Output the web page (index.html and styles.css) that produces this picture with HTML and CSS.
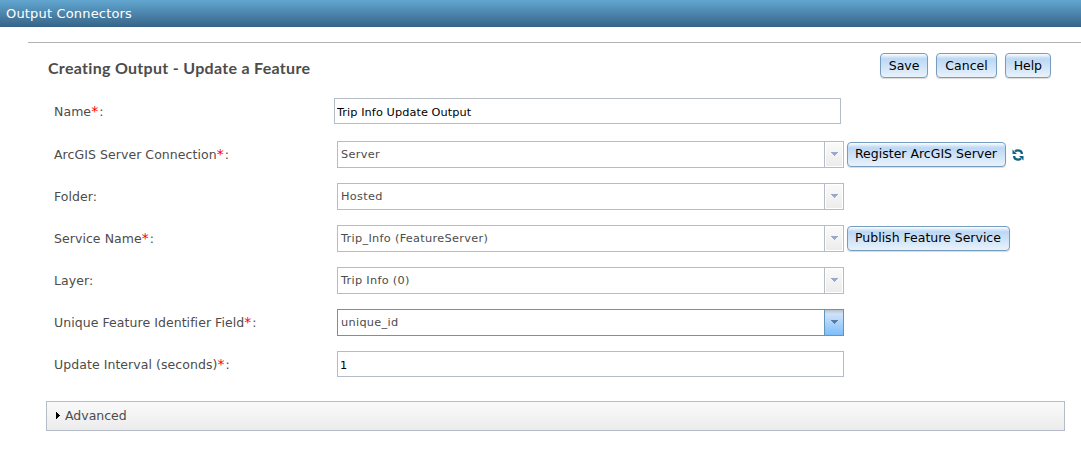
FILE: index.html
```html
<!DOCTYPE html>
<html lang="en">
<head>
  <meta charset="UTF-8">
  <title>Output Connectors</title>
  <link rel="stylesheet" href="styles.css">
</head>
<body>

  <div class="top-bar">Output Connectors</div>

  <div class="content">
    <div class="form-header">
      <h2>Creating Output - Update a Feature</h2>
      <div class="actions">
        <button class="btn">Save</button>
        <button class="btn">Cancel</button>
        <button class="btn">Help</button>
      </div>
    </div>

    <div class="form">
      <div class="row name-row">
        <label>Name<span class="required">*</span>:</label>
        <input class="text-input" type="text" value="Trip Info Update Output">
      </div>
      <div class="row">
        <label>ArcGIS Server Connection<span class="required">*</span>:</label>
        <div class="combo">
          <span class="value">Server</span>
          <span class="arrow"><svg width="7" height="4" viewBox="0 0 7 4"><path d="M0 0h7v1h-1v1h-1v1h-1v1h-1v-1h-1v-1h-1v-1h-1z"/></svg></span>
        </div>
        <button class="btn">Register ArcGIS Server</button>
        <svg class="refresh" width="12" height="12" viewBox="0 0 12 12">
          <path d="M3 2.3C5.2 0.9 9.9 0.9 9.9 5M9 9.7C6.8 11.1 2.1 11.1 2.1 7" fill="none" stroke="#135f86" stroke-width="2.2"/>
          <path d="M0.5 0.5v4.5h4.5zM11.5 11.5v-4.5h-4.5z" fill="#135f86"/>
        </svg>
      </div>
      <div class="row">
        <label>Folder:</label>
        <div class="combo">
          <span class="value">Hosted</span>
          <span class="arrow"><svg width="7" height="4" viewBox="0 0 7 4"><path d="M0 0h7v1h-1v1h-1v1h-1v1h-1v-1h-1v-1h-1v-1h-1z"/></svg></span>
        </div>
      </div>
      <div class="row">
        <label>Service Name<span class="required">*</span>:</label>
        <div class="combo">
          <span class="value">Trip_Info (FeatureServer)</span>
          <span class="arrow"><svg width="7" height="4" viewBox="0 0 7 4"><path d="M0 0h7v1h-1v1h-1v1h-1v1h-1v-1h-1v-1h-1v-1h-1z"/></svg></span>
        </div>
        <button class="btn">Publish Feature Service</button>
      </div>
      <div class="row">
        <label>Layer:</label>
        <div class="combo">
          <span class="value">Trip Info (0)</span>
          <span class="arrow"><svg width="7" height="4" viewBox="0 0 7 4"><path d="M0 0h7v1h-1v1h-1v1h-1v1h-1v-1h-1v-1h-1v-1h-1z"/></svg></span>
        </div>
      </div>
      <div class="row">
        <label>Unique Feature Identifier Field<span class="required">*</span>:</label>
        <div class="combo active">
          <span class="value">unique_id</span>
          <span class="arrow"><svg width="7" height="4" viewBox="0 0 7 4"><path d="M0 0h7v1h-1v1h-1v1h-1v1h-1v-1h-1v-1h-1v-1h-1z"/></svg></span>
        </div>
      </div>
      <div class="row">
        <label>Update Interval (seconds)<span class="required">*</span>:</label>
        <input class="text-input" type="text" value="1">
      </div>
    </div>

    <div class="advanced">
      <svg width="4" height="7" viewBox="0 0 4 7"><path d="M0 0h1v1h1v1h1v1h1v1h-1v1h-1v1h-1v1h-1z"/></svg>
      Advanced
    </div>
  </div>

</body>
</html>
```
FILE: styles.css
```css
:root {
  --border: #b5bcc7;
  --focus: #6397b9;
  --text: #4c4c4c;
}

* {
  box-sizing: border-box;
}

body {
  margin: 0;
  background: #fff;
  color: var(--text);
  font-family: Verdana, "DejaVu Sans", sans-serif;
  font-size: 12.5px;
}

svg {
  display: block;
  shape-rendering: crispEdges;
}

.top-bar {
  height: 27px;
  padding-left: 6px;
  background: linear-gradient(#62a6d0, #366488);
  color: #fff;
  font-size: 13px;
  letter-spacing: 0.17px;
  line-height: 27px;
}

.content {
  margin: 15px 0 0 28px;
  border-top: 1px solid #b2b2b2;
}

.form-header {
  display: flex;
  justify-content: space-between;
  align-items: flex-start;
  height: 47px;
  padding: 10px 30px 0 20px;
}

h2 {
  margin: 5px 0 0;
  font-family: Lato, sans-serif;
  font-size: 16px;
  font-weight: bold;
  letter-spacing: 0.3px;
  line-height: 20px;
}

.actions {
  display: flex;
  gap: 8px;
}

.btn {
  height: 25px;
  margin: 0;
  padding: 0 8px 1px 7px;
  border: 1px solid #769dc0;
  border-radius: 4px;
  background: linear-gradient(#fff 0, #d3e4f6 3px, #bcd8f4 5px, #e9f2fb 100%);
  box-shadow: 0 1px 1px rgba(0, 0, 0, 0.15);
  color: #000;
  font-family: inherit;
  font-size: 12.5px;
  white-space: nowrap;
}

.actions .btn {
  padding-left: 8px;
}

.actions .btn:first-child,
.actions .btn:last-child {
  letter-spacing: -0.05px;
}

.row {
  display: flex;
  align-items: center;
  height: 42px;
  padding-left: 26px;
}

.row label {
  width: 283px;
  letter-spacing: 0.06px;
}

.name-row {
  height: 43px;
  padding-bottom: 1px;
}

.name-row label {
  width: 280px;
}

.required {
  color: #f00;
  font-size: 14px;
  letter-spacing: 1px;
  line-height: 1;
}

.text-input {
  width: 507px;
  height: 26px;
  padding: 2px 2px 0;
  border: 1px solid var(--border);
  border-radius: 0;
  background: #fff;
  color: #000;
  font-family: inherit;
  font-size: 11.3px;
  letter-spacing: 0.08px;
}

.combo {
  display: flex;
  width: 507px;
  height: 27px;
  border: 1px solid var(--border);
  font-size: 11.3px;
  letter-spacing: 0.31px;
}

.combo .value {
  flex: 1;
  padding-left: 3px;
  line-height: 25px;
}

.combo .arrow {
  display: flex;
  align-items: center;
  justify-content: center;
  width: 18px;
  border: 1px solid #fff;
  background: linear-gradient(#fafafa, #ececec);
  box-shadow: -1px 0 0 var(--border);
  fill: #97a9d0;
}

.combo.active {
  border-color: var(--focus);
}

.combo.active .arrow {
  border: 0;
  background: linear-gradient(#b9c3cc 0, #cfe3f8 4px, #7dbefa 100%);
  box-shadow: -1px 0 0 var(--focus);
  fill: #557fa9;
}

.row .btn {
  margin-left: 3px;
}

.refresh {
  margin: 1px 0 0 6px;
  shape-rendering: auto;
}

.advanced {
  display: flex;
  align-items: center;
  gap: 5px;
  width: 1019px;
  height: 30px;
  margin: 16px 0 0 18px;
  padding: 0 0 2px 9px;
  border: 1px solid var(--border);
  background: linear-gradient(#fafafa, #ececec);
}
```
